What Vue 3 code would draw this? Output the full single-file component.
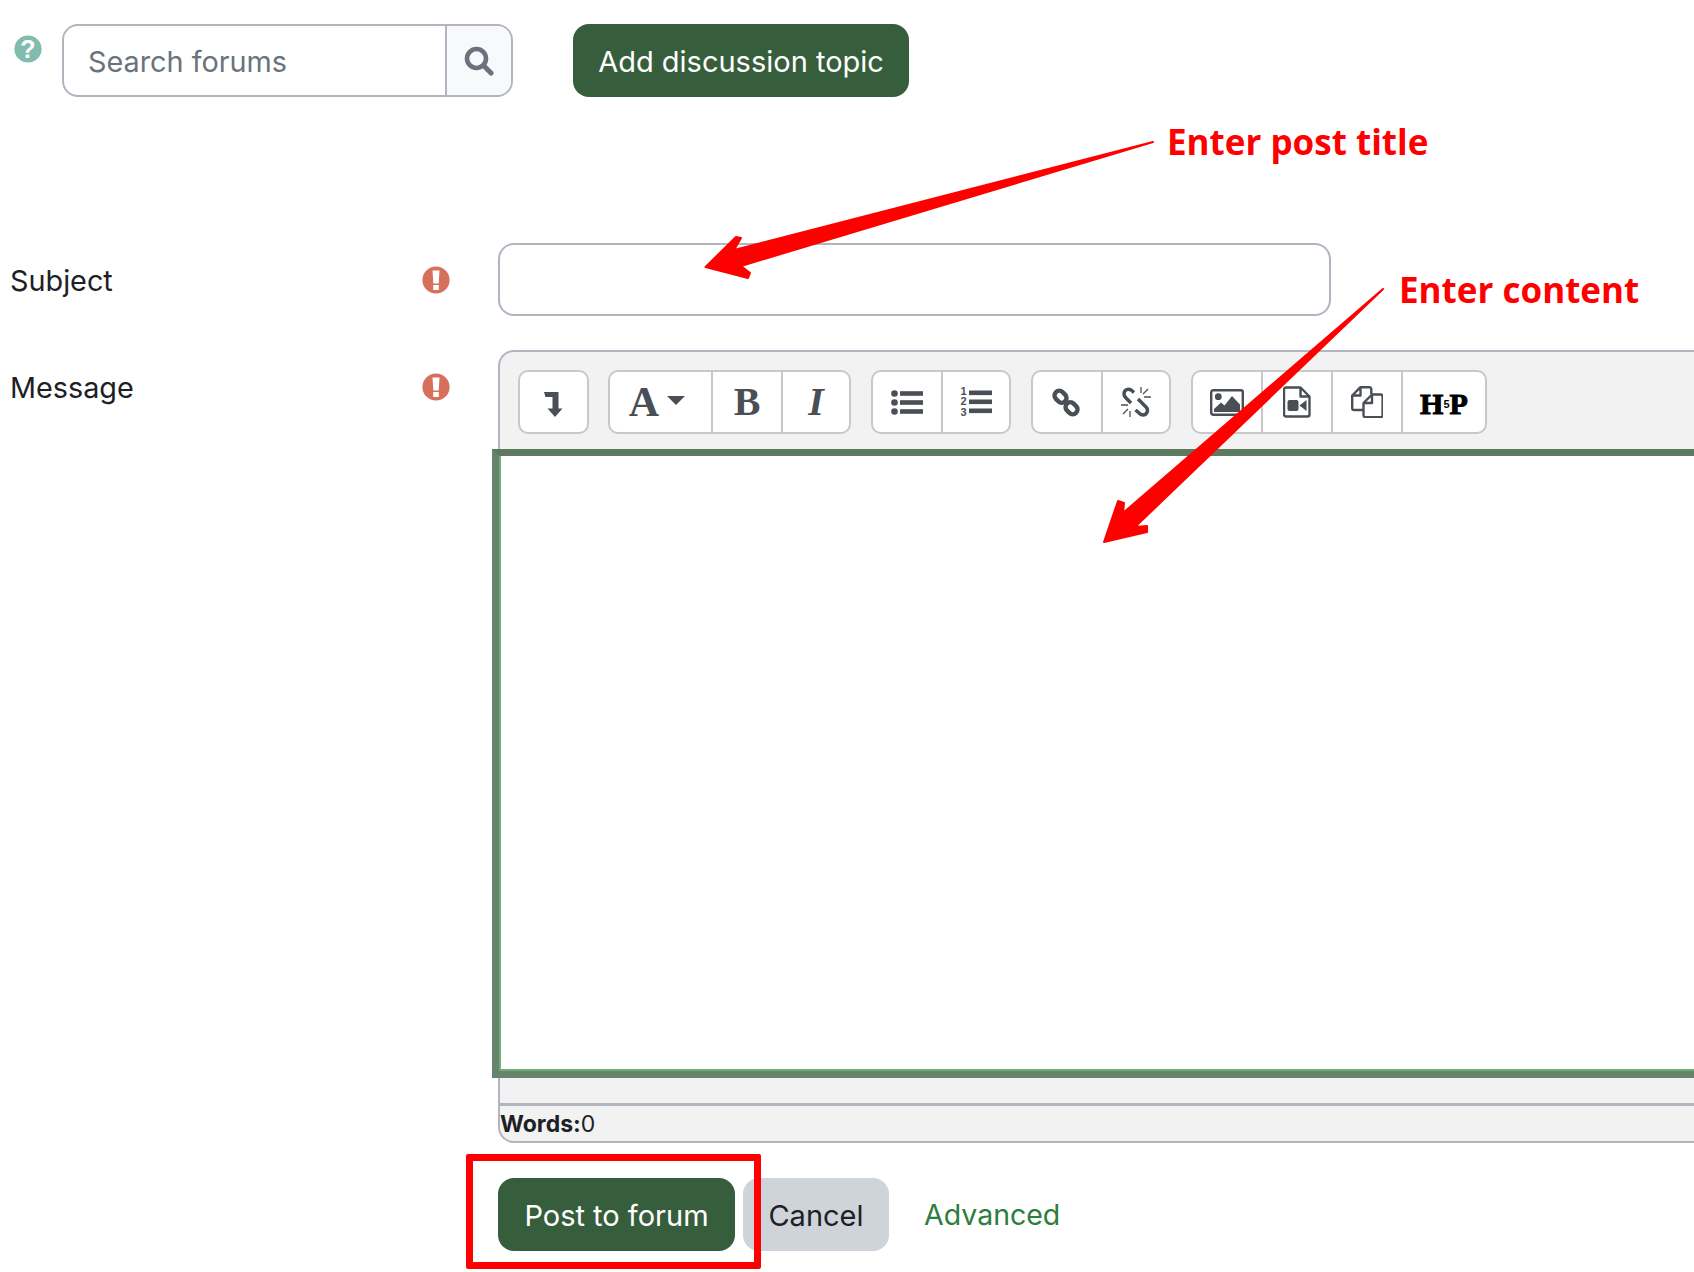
<script setup>
const sections = [
  [{ k: 'indent', w: 67 }],
  [{ k: 'font', w: 101 }, { k: 'b', w: 70 }, { k: 'i', w: 68 }],
  [{ k: 'ul', w: 68 }, { k: 'ol', w: 68 }],
  [{ k: 'link', w: 68 }, { k: 'unlink', w: 68 }],
  [{ k: 'img', w: 68 }, { k: 'vid', w: 70 }, { k: 'files', w: 70 }, { k: 'h5p', w: 84 }]
]
</script>

<template>
  <div class="page">
    <div class="search-row">
      <svg class="help" viewBox="0 0 28 28" aria-hidden="true"><circle cx="14" cy="14" r="13.6" fill="#81bcae"/><text x="14" y="23" text-anchor="middle" class="help-q">?</text></svg>
      <div class="search">
        <div class="search-input">Search forums</div>
        <div class="search-btn">
          <svg width="30" height="30" viewBox="0 0 30 30" aria-hidden="true"><circle cx="12.5" cy="12.500" r="9.500" fill="none" stroke="#6b727b" stroke-width="4.600"/><path d="M19.500 19.500l7.500 7.500" stroke="#6b727b" stroke-width="5" stroke-linecap="round"/></svg>
        </div>
      </div>
      <div class="btn primary add">Add discussion topic</div>
    </div>

    <div class="form-row subject-row">
      <div class="label">Subject</div>
      <svg class="req" viewBox="0 0 28 28" aria-hidden="true"><circle cx="14" cy="14" r="13.600" fill="#d6705c"/><path fill="#fff" d="M10.500 4.500h7l-.8 13h-5.400zM11.200 19h5.600v5h-5.600z"/></svg>
      <div class="subject-input"></div>
    </div>

    <div class="form-row message-row">
      <div class="label">Message</div>
      <svg class="req" viewBox="0 0 28 28" aria-hidden="true"><circle cx="14" cy="14" r="13.600" fill="#d6705c"/><path fill="#fff" d="M10.500 4.500h7l-.8 13h-5.400zM11.200 19h5.600v5h-5.600z"/></svg>
      <div class="editor">
        <div class="toolbar">
          <div v-for="(s, si) in sections" :key="si" class="group">
            <div v-for="it in s" :key="it.k" class="tool" :style="{ width: it.w + 'px' }">
              <svg v-if="it.k === 'indent'" class="nudge" width="19" height="25" viewBox="0 0 19 25"><path fill="#4a4f56" d="M0 0h14.500v16.500h4L11 25 3.500 16.500h5V5H1.500z"/></svg>
              <template v-else-if="it.k === 'font'">
                <span class="t-a">A</span><span class="caret"></span>
              </template>
              <span v-else-if="it.k === 'b'" class="t-b">B</span>
              <span v-else-if="it.k === 'i'" class="t-i">I</span>
              <svg v-else-if="it.k === 'ul'" width="32" height="25" viewBox="0 0 32 25"><g fill="#4a4f56"><circle cx="3.500" cy="3.500" r="3.300"/><circle cx="3.500" cy="12.500" r="3.300"/><circle cx="3.500" cy="21.500" r="3.300"/><rect x="9" y="1.200" width="23" height="4.600"/><rect x="9" y="10.200" width="23" height="4.600"/><rect x="9" y="19.200" width="23" height="4.600"/></g></svg>
              <svg v-else-if="it.k === 'ol'" width="32" height="32" viewBox="0 0 32 32"><g fill="#4a4f56"><text x="3.500" y="8.500" class="ol-n">1</text><text x="3.500" y="19" class="ol-n">2</text><text x="3.500" y="30" class="ol-n">3</text><rect x="9" y="4.500" width="23" height="4.600"/><rect x="9" y="13.500" width="23" height="4.600"/><rect x="9" y="22.500" width="23" height="4.600"/></g></svg>
              <svg v-else-if="it.k === 'link'" class="shift-left" width="30" height="31" viewBox="0 0 30 31"><g fill="none" stroke="#4a4f56" stroke-width="4.400"><rect x="3" y="5" width="13" height="9.500" rx="4.700" transform="rotate(45 9.500 9.750)"/><rect x="14" y="16.500" width="13" height="9.500" rx="4.700" transform="rotate(45 20.500 21.250)"/></g></svg>
              <svg v-else-if="it.k === 'unlink'" width="30" height="30" viewBox="0 0 30 30"><g fill="none" stroke="#4a4f56" stroke-width="3.500"><path d="M13 5.500L10 3C7 1 3 3 3 7c0 2 1 3 2 4l5 5"/><path d="M17 12l8 8c3 3 1 8-3 8-2 0-3-1-4-2l-3.500-3"/></g><path stroke="#4a4f56" stroke-width="1.300" d="M20 0v6M27 2l-5 5M30 10h-7M0 18h7M2 27l5-5M9 30v-6"/></svg>
              <svg v-else-if="it.k === 'img'" width="34" height="27" viewBox="0 0 34 27"><rect x="1.200" y="1.200" width="31.600" height="24.600" rx="2" fill="none" stroke="#4a4f56" stroke-width="2.400"/><circle cx="8.300" cy="7.700" r="3.400" fill="#4a4f56"/><path fill="#4a4f56" d="M4 23v-3l7-6.500 3.500 3L22 7l8 8.500V23z"/></svg>
              <svg v-else-if="it.k === 'vid'" width="28" height="32" viewBox="0 0 28 32"><path fill="none" stroke="#4a4f56" stroke-width="2.400" stroke-linejoin="round" d="M3 1.500h14.500L26.500 10.500V28.500a2 2 0 0 1-2 2H3a2 2 0 0 1-2-2V3.500a2 2 0 0 1 2-2zM17.500 1.500v9h9"/><rect x="4.500" y="14" width="11" height="11" rx="2" fill="#4a4f56"/><path fill="#4a4f56" d="M23.500 14v11L16.500 19.500z"/></svg>
              <svg v-else-if="it.k === 'files'" width="32" height="32" viewBox="0 0 32 32"><g fill="none" stroke="#4a4f56" stroke-width="2.400" stroke-linejoin="round"><path d="M12.500 24H3a1.800 1.800 0 0 1-1.800-1.800V9.500L9.500 1.200h9a1.800 1.800 0 0 1 1.800 1.800v5M9.500 1.200v8.300H1.200"/><path d="M21 8.500h8.800a1.800 1.800 0 0 1 1.800 1.800v19a1.800 1.800 0 0 1-1.800 1.800H14.300a1.800 1.800 0 0 1-1.800-1.800V17L21 8.500zM21 8.500V17h-8.500"/></g></svg>
              <span v-else-if="it.k === 'h5p'" class="t-h5p"><span>H</span><span class="five">5</span><span>P</span></span>
            </div>
          </div>
        </div>
        <div class="editable"></div>
        <div class="spacer"></div>
        <div class="words"><b>Words:</b>0</div>
      </div>
    </div>

    <div class="actions">
      <div class="btn primary post">Post to forum</div>
      <div class="btn secondary">Cancel</div>
      <div class="advanced">Advanced</div>
      <div class="highlight"></div>
    </div>

    <svg class="arrows" width="1694" height="1272" viewBox="0 0 1694 1272" aria-hidden="true">
      <path fill="#ff0000" stroke="#ff0000" stroke-width="2" stroke-linejoin="round" d="M1153 142L734 250L741 238L736 237L705.500 267L748 278L750 273L741 266Z"/>
      <path fill="#ff0000" stroke="#ff0000" stroke-width="2" stroke-linejoin="round" d="M1383 289L1123 513L1124 503L1118 501L1104 542L1147 532L1147 526L1135 527Z"/>
    </svg>
    <span class="note note-title">Enter post title</span>
    <span class="note note-content">Enter content</span>
  </div>
</template>

<style>
html, body { margin: 0; background: #fff; }
</style>

<style scoped>
.page {
  position: relative;
  width: 1694px;
  height: 1272px;
  overflow: hidden;
  background: #fff;
  color: #1d2125;
  font-family: Inter, "Liberation Sans", sans-serif;
  font-size: 29px;
}
.search-row {
  display: flex;
  align-items: flex-start;
  padding: 24px 0 0 14px;
  height: 73px;
}
.help { width: 28px; height: 28px; margin: 11px 20px 0 0; flex: none; }
.help-q {
  font-family: "Liberation Sans", sans-serif;
  font-weight: 700;
  font-size: 25px;
  fill: #fff;
}
.search {
  display: flex;
  width: 451px;
  height: 73px;
  box-sizing: border-box;
  border: 2px solid #b0b5c0;
  border-radius: 16px;
  overflow: hidden;
}
.search-input {
  flex: 1;
  padding-left: 24px;
  line-height: 71px;
  font-size: 28.800px;
  color: #6a737b;
}
.search-btn {
  width: 66px;
  box-sizing: border-box;
  border-left: 2px solid #b0b5c0;
  background: #f8f9fa;
  display: flex;
  align-items: center;
  justify-content: center;
}
.btn {
  height: 73px;
  line-height: 75px;
  border-radius: 16px;
  text-align: center;
  box-sizing: border-box;
  flex: none;
}
.primary { background: #375e3c; color: #fff; }
.secondary { background: #ced4da; color: #1d2125; width: 146px; margin-left: 8px; }
.add { width: 336px; margin-left: 60px; }
.post { width: 237px; }
.form-row { display: flex; align-items: flex-start; padding-left: 10px; }
.label { width: 412px; flex: none; font-size: 28.800px; }
.req { width: 28px; height: 28px; flex: none; margin-right: 48px; }
.subject-row { margin-top: 146px; }
.subject-row .label { padding-top: 17px; line-height: 42px; }
.subject-row .req { margin-top: 23px; }
.subject-input {
  width: 833px;
  height: 73px;
  box-sizing: border-box;
  border: 2px solid #b0b5c0;
  border-radius: 16px;
}
.message-row { margin-top: 34px; }
.message-row .label { padding-top: 17px; line-height: 42px; }
.message-row .req { margin-top: 23px; }
.editor {
  width: 1300px;
  flex: none;
  height: 793px;
  box-sizing: border-box;
  border: 2px solid #b0b5c0;
  border-right: 0;
  border-radius: 16px 0 0 16px;
  background: #f2f2f2;
  display: flex;
  flex-direction: column;
}
.toolbar {
  display: flex;
  gap: 20px;
  padding: 18px 0 0 18px;
  height: 97px;
  box-sizing: border-box;
  flex: none;
}
.group {
  display: flex;
  height: 64px;
  box-sizing: border-box;
  border: 2px solid #c8c8c8;
  border-radius: 10px;
  background: #fff;
  overflow: hidden;
}
.group:first-child { margin-right: -1px; }
.tool {
  display: flex;
  align-items: center;
  justify-content: center;
  box-sizing: border-box;
  border-left: 2px solid #c8c8c8;
  color: #4a4f56;
}
.tool:first-child { border-left: 0; }
.nudge { margin-top: 4px; }
.shift-left { margin-left: -2px; }
.t-a, .t-b, .t-i {
  font-family: "Liberation Serif", serif;
  font-weight: 700;
  line-height: 1;
}
.t-a { font-size: 42px; margin-left: -7px; }
.t-b { font-size: 40px; }
.t-i { font-size: 40px; font-style: italic; }
.caret {
  width: 0;
  height: 0;
  margin-left: 8px;
  margin-top: -3px;
  border-left: 9px solid transparent;
  border-right: 9px solid transparent;
  border-top: 9px solid #4a4f56;
}
.ol-n {
  font-family: "Liberation Sans", sans-serif;
  font-weight: 700;
  font-size: 11px;
  text-anchor: middle;
}
.t-h5p {
  display: inline-flex;
  align-items: center;
  font-family: "Liberation Serif", serif;
  font-weight: 700;
  font-size: 30px;
  line-height: 1;
  color: #000;
  -webkit-text-stroke: 1px #000;
  margin-top: 4px;
}
.five {
  font-family: "Liberation Sans", sans-serif;
  font-size: 11px;
  font-weight: 700;
  -webkit-text-stroke: 0;
}
.editable {
  margin-left: -8px;
  height: 629px;
  box-sizing: border-box;
  background: #fff;
  border: 7px solid #66846b;
  border-top-color: #5c7a5e;
  border-right: 0;
  box-shadow: inset 2px 0 0 #6fae76, inset 0 -2px 0 #6fae76;
  flex: none;
}
.spacer { height: 28px; box-sizing: border-box; border-bottom: 3px solid #b0b5c0; flex: none; }
.words {
  font-size: 23px;
  line-height: 36px;
  padding-left: 0;
  color: #1d2125;
}
.actions {
  position: relative;
  display: flex;
  align-items: center;
  margin: 34px 0 0 498px;
}
.advanced { margin-left: 35px; color: #2e7d3e; font-size: 28.500px; line-height: 75px; }
.highlight {
  position: absolute;
  left: -32px;
  top: -23px;
  width: 295px;
  height: 115px;
  box-sizing: border-box;
  border: 7px solid #ff0000;
  border-radius: 2px;
}
.arrows { position: absolute; left: 0; top: 0; pointer-events: none; }
.note {
  position: absolute;
  font-family: "Open Sans", sans-serif;
  font-weight: 700;
  font-size: 35px;
  line-height: 44px;
  color: #ff0000;
  white-space: nowrap;
}
.note-title { left: 1167px; top: 120px; }
.note-content { left: 1399px; top: 268px; }
</style>
